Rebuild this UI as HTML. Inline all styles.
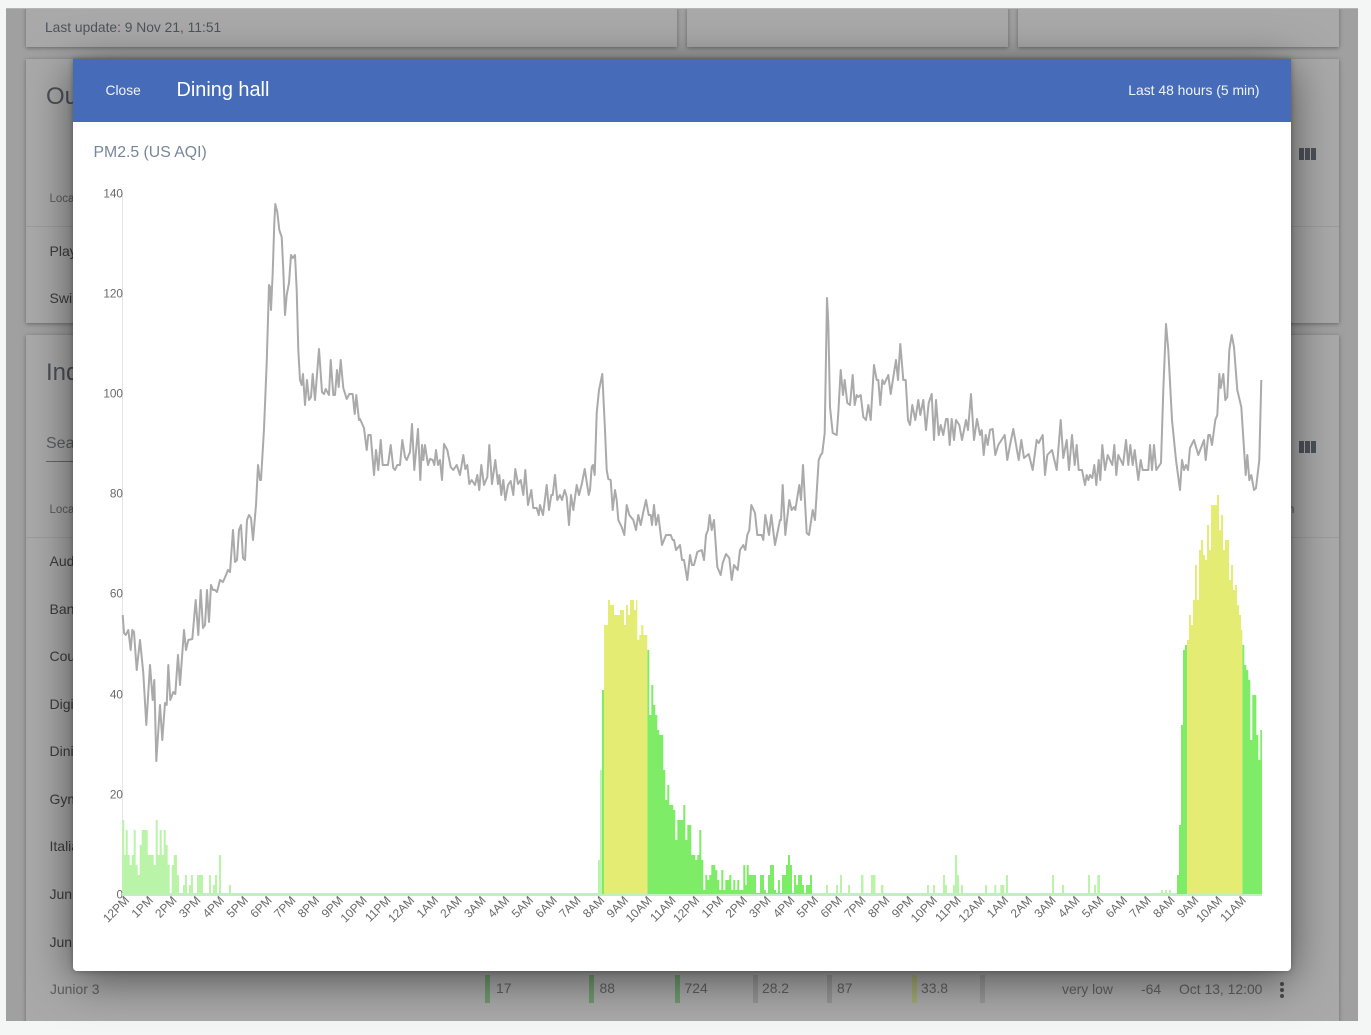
<!DOCTYPE html>
<html lang="en">
<head>
<meta charset="utf-8">
<title>Dining hall</title>
<style>
html,body{margin:0;padding:0;background:#f4f6f6;}
body{width:1371px;height:1035px;position:relative;overflow:hidden;font-family:"Liberation Sans",sans-serif;}
.a{position:absolute;}
.bg{left:6px;top:8px;width:1352px;height:1013px;background:#a0a0a0;overflow:hidden;border-top:1px solid #b5b5b5;box-sizing:border-box;}
.card{position:absolute;background:#a9a9a9;box-shadow:0 1px 4px rgba(0,0,0,.35);}
.t{position:absolute;white-space:nowrap;color:#4d4f52;line-height:1;}
.s{font-size:14px;color:#3c3c3c;}
.h{font-size:24px;color:#4b5159;}
.l{font-size:11.5px;color:#5c5c5c;}
.v{font-size:13.9px;color:#5f5f5f;}
.b{position:absolute;top:967px;width:5px;height:28px;}
.modal{position:absolute;left:73px;top:59px;width:1218px;height:912px;background:#fff;border-radius:0 0 4px 4px;box-shadow:0 8px 45px rgba(0,0,0,.55),0 0 6px rgba(0,0,0,.3);overflow:hidden;}
.head{position:absolute;left:0;top:0;width:100%;height:63px;background:#466cb9;}
.head div{position:absolute;white-space:nowrap;line-height:1;color:#f0f3fa;}
svg{position:absolute;left:0;top:0;}
svg text{font-family:"Liberation Sans",sans-serif;font-size:12px;fill:#6a6a6a;}
.y text{text-anchor:end;font-size:11.8px;}
.x text{text-anchor:end;}
</style>
</head>
<body>
<div class="a bg">
  <div class="card" style="left:20px;top:-2px;width:651px;height:40px"></div>
  <div class="card" style="left:681px;top:-2px;width:321px;height:40px"></div>
  <div class="card" style="left:1012px;top:-2px;width:321px;height:40px"></div>
  <div class="card" style="left:20px;top:50px;width:1313px;height:264px"></div>
  <div class="card" style="left:20px;top:326px;width:1313px;height:690px"></div>
  <div class="a" style="left:20px;top:217px;width:1313px;height:1px;background:#9c9c9c"></div>
  <div class="a" style="left:20px;top:528px;width:1313px;height:1px;background:#9c9c9c"></div>
</div>

<div class="t" style="left:45px;top:21px;font-size:13.800px;color:#4e545c">Last update: 9 Nov 21, 11:51</div>
<div class="t h" style="left:46px;top:85px">Outdoor</div>
<div class="t l" style="left:49.500px;top:194px">Location</div>
<div class="t s" style="left:49.500px;top:244px">Playground</div>
<div class="t s" style="left:49.500px;top:291px">Swimming pool</div>
<div class="t h" style="left:46px;top:361px">Indoor</div>
<div class="t" style="left:46px;top:435.500px;font-size:16px;color:#5a5f66">Search</div>
<div class="a" style="left:46px;top:461px;width:40px;height:1px;background:#666"></div>
<div class="t l" style="left:49.500px;top:505px">Location</div>
<div class="t s" style="left:49.500px;top:554px">Auditorium</div>
<div class="t s" style="left:49.500px;top:602px">Band room</div>
<div class="t s" style="left:49.500px;top:649px">Counseling</div>
<div class="t s" style="left:49.500px;top:697px">Digital lab</div>
<div class="t s" style="left:49.500px;top:744px">Dining hall</div>
<div class="t s" style="left:49.500px;top:792px">Gym</div>
<div class="t s" style="left:49.500px;top:839px">Italian</div>
<div class="t s" style="left:49.500px;top:887px">Junior 1</div>
<div class="t s" style="left:49.500px;top:935px">Junior 2</div>
<div class="t v" style="left:50px;top:983px">Junior 3</div>
<div class="t l" style="left:1288px;top:505px">n</div>

<svg width="1371" height="1035" viewBox="0 0 1371 1035">
  <path fill="#4d525a" d="M1299 148h5v12h-5zM1305 148h5v12h-5zM1311 148h5v12h-5zM1299 441h5v12h-5zM1305 441h5v12h-5zM1311 441h5v12h-5z"/>
  <circle cx="1282" cy="984" r="2" fill="#4a4a4a"/><circle cx="1282" cy="990" r="2" fill="#4a4a4a"/><circle cx="1282" cy="996" r="2" fill="#4a4a4a"/>
</svg>

<div class="b" style="left:485px;top:975px;background:#6f9a6f"></div>
<div class="t v" style="left:496px;top:982px">17</div>
<div class="b" style="left:589px;top:975px;background:#6f9a6f"></div>
<div class="t v" style="left:599.500px;top:982px">88</div>
<div class="b" style="left:675px;top:975px;background:#6f9a6f"></div>
<div class="t v" style="left:684.500px;top:982px">724</div>
<div class="b" style="left:753px;top:975px;background:#959595"></div>
<div class="t v" style="left:762px;top:982px">28.2</div>
<div class="b" style="left:827px;top:975px;background:#959595"></div>
<div class="t v" style="left:837px;top:982px">87</div>
<div class="b" style="left:912px;top:975px;background:#a3a96f"></div>
<div class="t v" style="left:921px;top:982px">33.8</div>
<div class="b" style="left:980px;top:975px;background:#979797"></div>
<div class="t v" style="left:1062px;top:983px">very low</div>
<div class="t v" style="left:1141px;top:983px">-64</div>
<div class="t v" style="left:1179px;top:983px">Oct 13, 12:00</div>

<div class="modal">
  <div class="head">
    <div style="left:32.500px;top:25px;font-size:13.800px">Close</div>
    <div style="left:103.500px;top:22px;font-size:19.900px;color:#fff">Dining hall</div>
    <div style="right:31.500px;top:25px;font-size:13.900px">Last 48 hours (5 min)</div>
  </div>
  <div style="position:absolute;left:20.500px;top:85.500px;font-size:15.800px;line-height:1.05;color:#78869a;white-space:nowrap">PM2.5 (US AQI)</div>
</div>

<svg width="1371" height="1035" viewBox="0 0 1371 1035">
  <rect x="122" y="193" width="1" height="702" fill="#e4e4e4"/>
  <g class="y">
    <text x="123" y="197.500">140</text>
    <text x="123" y="297.500">120</text>
    <text x="123" y="397.500">100</text>
    <text x="123" y="497.500">80</text>
    <text x="123" y="597.500">60</text>
    <text x="123" y="698.500">40</text>
    <text x="123" y="798.500">20</text>
    <text x="123" y="898.500">0</text>
  </g>
  <rect x="122" y="893" width="1140" height="2" fill="#c2eec4"/>
  <rect x="122" y="895" width="1140" height="1" fill="#cfe2e2"/>
  <path fill="#b9f4a9" d="M122.300 894V820H124.300V855H125.700V830H127.700V855H129.700V865H131.700V855H133.700V830H135.700V865H137.700V875H139.700V845H141.700V830H147.700V855H153.700V865H155.700V820H157.700V855H159.700V830H161.700V855H163.700V830H165.700V845H167.700V865H169.700V894H171.700V865H173.700V855H177V875H179V894H183V885H185V875H187V894H189V885H191V875H193V894H197V875H203V894H209V875H211V894H213V885H215V875H217V894H219V855H221V894H229V885H231V894Z
  M598 894V860H600V770H602V894Z
  M826 894V885H828V894Z M836 894V885H838V894Z M840 894V875H842V894Z M848 894V885H850V894Z
  M861 894V875H863.500V894Z M871 894V875H875.500V894Z M881 894V885H883.500V894Z
  M927 894V885H929V894Z M933 894V885H935V894Z M943 894V875H945V885H947V894Z
  M953 894V885H955V855H957V875H959V894Z M961 894V885H963V894Z M985 894V885H987V894Z
  M994.300 894V885H996.300V894Z M1000.300 894V885H1004.300V894Z M1006 894V875H1008V894Z
  M1052 894V875H1054V894Z M1062 894V885H1064V894Z M1088 894V875H1090V894Z M1094 894V885H1096V894Z M1097.300 894V875H1100V894Z
  M1161 894V890H1163V894Z M1165 894V890H1167V894Z M1169 894V890H1171V894Z"/>
  <path fill="#7eec67" d="M602 894V690H604V894Z
  M647.300 894V650H649.300V715H651.300V685H653.300V705H655.300V715H657.300V730H659.300V735H663.300V770H665.300V800H667.300V785H669.300V805H673.300V810H675.300V840H677.300V820H683.300V805H685.300V840H687.300V825H691.300V855H695.300V860H697.300V855H699.300V830H701.300V860H703.300V890H705.300V875H707.300V880H709.300V875H711.300V865H715.300V870H717.300V880H719.300V890H721.300V870H723.300V890H725.300V880H729.300V875H731.300V890H733.300V880H735.300V890H737.300V880H739.300V890H743.300V865H745.300V885H746.700V865H748.700V875H756V893H760V875H764V890H766V893H768V875H770V865H774V890H776V893H778V880H780V893H782V875H786V865H788V855H790V865H792V893H794V875H796V885H798V875H802V885H804V893H806V885H810V875H812V894Z
  M1177 894V875H1179V825H1181V725H1183V650H1185V645H1187V894Z
  M1242.300 894V645H1244.300V665H1246.300V670H1248.300V680H1250.300V740H1252.300V695H1256.300V735H1258.300V760H1260.300V730H1262V894Z"/>
  <path fill="#e4ec73" d="M604 894V625H608V600H610V605H614V615H620V610H624V625H626V605H628V615H630V600H634V610H636V600H637.300V640H639.300V635H641.300V625H643.300V635H647.300V894Z
  M1187 894V640H1189V615H1191V625H1193V600H1195V565H1197V600H1199V550H1201V540H1203V555H1205V560H1207V525H1209V550H1211V505H1217V495H1219V530H1221V515H1223V550H1225V540H1229V580H1231V565H1233V590H1235V585H1237V605H1239V615H1241V630H1242.300V894Z"/>
  <polyline fill="none" stroke="#aaaaaa" stroke-width="2" stroke-linejoin="round" points="122.700,615 124,633 125.700,635 128.300,630 130.700,650 132.300,630 134,632 136.700,670 140,640 143.300,673 146.300,725 150,665 152.700,700 154.300,680 156.300,761 160,705 162.300,740 165,703 166.700,705 168.300,665 170.300,700 173.300,692 175.300,694 178,655 180,685 184,630 186,650 188.300,640 192.300,639 195.700,600 198.300,635 200.700,590 203,628 205,625 207,590 209,622 211,585 213,590 215,590 217,592 220,580 223,582 226,575 228,570 230,572 233,530 235,562 237,560 239,530 241,525 243,558 245,560 247,520 249,515 251,518 253,540 256,505 258,465 260,480 261,480 264,429 266.700,363 269,285 270,287 271,310 272.700,273 274.300,223 275.300,204 277.300,212 279.300,230 281.700,237 283.300,270 285,315 286.700,295 289,283 291,255 292.700,258 295,255 296.700,290 298.300,350 300,380 301.700,385 303,374 305,405 307,380 309,400 311,397 312.700,374 315,400 319,349 322,392 324,394 325.700,389 329,395 330.700,360 333.300,395 335,395 337,370 338.700,387 340.700,360 343.300,388 346.700,399 349.300,394 352.700,394 354.700,414 356.300,395 359,420 360,419 364,428 366.700,450 368.300,435 370.700,435 374,475 376,450 378.300,470 380.700,440 382.700,465 388,465 390.700,445 393.300,468 395,470 397.300,465 400,465 402.300,440 405,457 406.700,460 410,452 412,424 414.300,470 418,429 420.300,480 422,445 423.300,460 425,445 428,465 430,459 432.700,460 434.300,465 436,450 438,465 440,460 442,480 444,444 447.300,450 450.700,467 453.300,470 456.700,465 460,475 463.300,455 465.300,469 467.300,465 469.300,484 471.700,480 475,485 477.300,475 479.300,490 481.300,465 484,485 487.300,477 489.300,445 492,484 495.300,460 498,484 499.300,475 501.300,495 503.300,480 505.300,500 508,485 510.700,481 513.300,495 515.300,469 518,484 520.700,480 523.300,495 525.300,470 528,505 531.300,490 533.300,508 536.700,508 538.700,515 540,505 543,515 546.700,485 549,510 551.300,495 552.700,495 555,475 557.300,500 560,495 562,500 564.700,490 566.700,497 569,525 571,495 573.300,510 576.700,485 579,495 582,483 584.700,469 588.700,495 590,490 591.700,467 593,465 594.700,475 596.700,413 599,390 602.300,374 605,430 606.700,470 608.300,479 610.700,480 612.700,510 615,490 616.700,500 618.300,520 621.700,527 624.300,535 626.700,505 629.300,515 633.300,520 636,530 638.300,515 640.700,525 643.300,512 646,500 648.700,515 650.700,515 652,525 654,505 656,525 658.300,515 662,545 666,535 670.700,535 672.700,540 674,540 676,550 680,545 682,560 684,560 687.300,580 690,555 692,565 694,565 697.300,552 701.700,550 704,560 706,535 708,530 709.700,515 711.700,530 714,520 717.300,567 720.700,575 722.700,563 726,554 729.300,558 731.700,580 734,565 737.700,570 740,550 743.300,545 745.300,550 747.300,535 749.300,530 751.300,505 755,513 757.300,535 761.700,535 763.300,540 765.300,515 769,535 771.300,515 775,545 780,520 781,520 782.700,485 785.300,535 789.300,500 791.700,510 794,507 795.300,510 799.300,485 801,500 803,465 806.700,533 809,535 812.700,510 815,520 818.700,460 820.700,455 822.300,453 824.700,433 827,298 828.300,323 830,407 832.700,433 836.700,435 838.300,413 840.700,370 843,395 844.700,380 847.300,403 850,405 852.700,375 854.700,405 856.700,395 858.300,397 860.700,395 863.300,417 866,420 868.300,405 870.700,420 874,365 876.700,380 878.300,380 880.300,405 882.300,380 884.300,384 888.300,375 890.700,394 896,360 898,380 900.300,344 903.300,380 905.700,380 908,420 910,425 912.300,405 915.300,420 918.300,400 920.300,415 923.300,400 926,430 928.700,403 931.700,394 934,440 936,400 938.700,435 940.700,425 943.300,435 946,419 947.700,419 949.700,445 951.700,419 954,440 956,420 959.300,425 962,440 966,420 968,430 971,394 974,440 977,419 980,435 981.700,430 983.700,455 985.700,435 987.700,445 990,430 992.700,429 995.300,455 998.300,445 1004.700,435 1007.300,460 1010,445 1013.300,429 1018.700,460 1021.300,440 1024,458 1028.700,454 1032.700,470 1036.700,440 1038.700,443 1042.700,435 1045,475 1047.300,455 1052,450 1056.700,470 1060.700,420 1063.300,458 1066.700,440 1069,470 1072,435 1074.700,465 1076.700,445 1078.700,470 1082,470 1085,485 1086.700,475 1088.300,480 1090,475 1092.300,478 1094.300,465 1096.300,485 1098.700,460 1100.300,480 1102.300,445 1105,470 1107.700,455 1112.300,465 1114.300,445 1116.300,475 1118.300,455 1123,465 1126,440 1128.300,465 1130.300,445 1132.700,465 1134.700,450 1138.300,480 1140.700,460 1142.700,470 1148.300,470 1150,445 1152,470 1154,445 1156.300,470 1161,463 1163.300,390 1166,324 1168.300,350 1172,420 1176,460 1180,490 1182,460 1184,470 1186,465 1188,470 1190,448 1194,440 1198.300,455 1204,440 1205.700,460 1208.300,435 1210,435 1212,445 1215.300,420 1217.300,415 1219.300,374 1220.700,388 1223.300,374 1225.300,400 1227.300,397 1229.300,350 1231.700,335 1234,347 1237.300,390 1241.300,407 1245.700,475 1247.300,455 1249.300,480 1251.300,475 1254,490 1256,488 1259.300,460 1261.300,380"/>
  <g class="x">
    <text transform="translate(130 901) rotate(-45)">12PM</text>
    <text transform="translate(153.800 901) rotate(-45)">1PM</text>
    <text transform="translate(177.500 901) rotate(-45)">2PM</text>
    <text transform="translate(201.300 901) rotate(-45)">3PM</text>
    <text transform="translate(225 901) rotate(-45)">4PM</text>
    <text transform="translate(248.800 901) rotate(-45)">5PM</text>
    <text transform="translate(272.600 901) rotate(-45)">6PM</text>
    <text transform="translate(296.300 901) rotate(-45)">7PM</text>
    <text transform="translate(320.100 901) rotate(-45)">8PM</text>
    <text transform="translate(343.800 901) rotate(-45)">9PM</text>
    <text transform="translate(367.600 901) rotate(-45)">10PM</text>
    <text transform="translate(391.400 901) rotate(-45)">11PM</text>
    <text transform="translate(415.100 901) rotate(-45)">12AM</text>
    <text transform="translate(438.900 901) rotate(-45)">1AM</text>
    <text transform="translate(462.600 901) rotate(-45)">2AM</text>
    <text transform="translate(486.400 901) rotate(-45)">3AM</text>
    <text transform="translate(510.200 901) rotate(-45)">4AM</text>
    <text transform="translate(533.900 901) rotate(-45)">5AM</text>
    <text transform="translate(557.700 901) rotate(-45)">6AM</text>
    <text transform="translate(581.400 901) rotate(-45)">7AM</text>
    <text transform="translate(605.200 901) rotate(-45)">8AM</text>
    <text transform="translate(629 901) rotate(-45)">9AM</text>
    <text transform="translate(652.700 901) rotate(-45)">10AM</text>
    <text transform="translate(676.500 901) rotate(-45)">11AM</text>
    <text transform="translate(700.200 901) rotate(-45)">12PM</text>
    <text transform="translate(724 901) rotate(-45)">1PM</text>
    <text transform="translate(747.800 901) rotate(-45)">2PM</text>
    <text transform="translate(771.500 901) rotate(-45)">3PM</text>
    <text transform="translate(795.300 901) rotate(-45)">4PM</text>
    <text transform="translate(819 901) rotate(-45)">5PM</text>
    <text transform="translate(842.800 901) rotate(-45)">6PM</text>
    <text transform="translate(866.600 901) rotate(-45)">7PM</text>
    <text transform="translate(890.300 901) rotate(-45)">8PM</text>
    <text transform="translate(914.100 901) rotate(-45)">9PM</text>
    <text transform="translate(937.800 901) rotate(-45)">10PM</text>
    <text transform="translate(961.600 901) rotate(-45)">11PM</text>
    <text transform="translate(985.400 901) rotate(-45)">12AM</text>
    <text transform="translate(1009.100 901) rotate(-45)">1AM</text>
    <text transform="translate(1032.900 901) rotate(-45)">2AM</text>
    <text transform="translate(1056.600 901) rotate(-45)">3AM</text>
    <text transform="translate(1080.400 901) rotate(-45)">4AM</text>
    <text transform="translate(1104.200 901) rotate(-45)">5AM</text>
    <text transform="translate(1127.900 901) rotate(-45)">6AM</text>
    <text transform="translate(1151.700 901) rotate(-45)">7AM</text>
    <text transform="translate(1175.400 901) rotate(-45)">8AM</text>
    <text transform="translate(1199.200 901) rotate(-45)">9AM</text>
    <text transform="translate(1223 901) rotate(-45)">10AM</text>
    <text transform="translate(1246.700 901) rotate(-45)">11AM</text>
  </g>
</svg>
</body>
</html>
